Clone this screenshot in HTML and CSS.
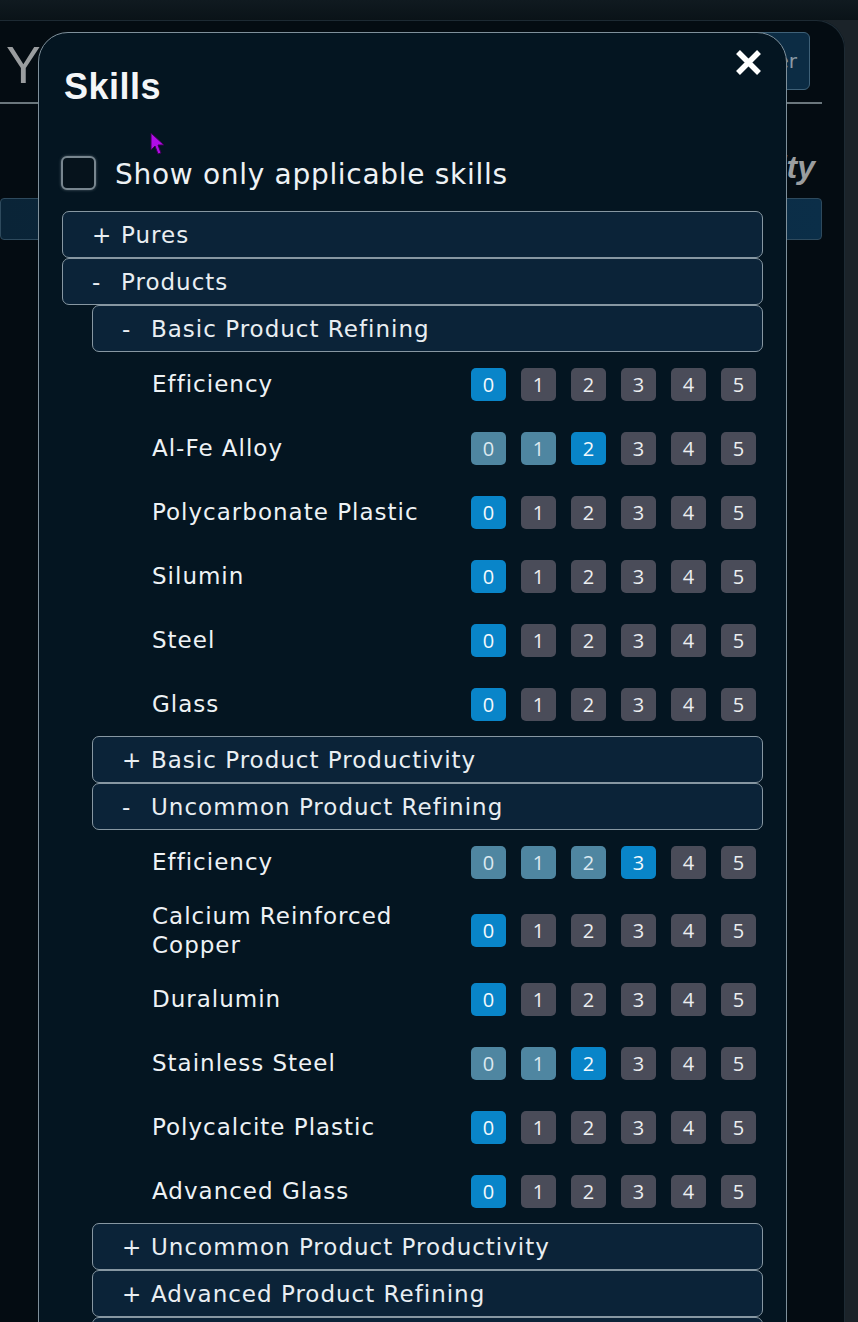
FILE: index.html
```html
<!DOCTYPE html>
<html lang="en">
  <head>
    <meta charset="UTF-8" />
    <meta name="viewport" content="width=device-width, initial-scale=1.0" />
    <title>Skills</title>
    <link rel="stylesheet" href="styles.css">
  </head>
  <body>
    <div class="panel">
      <div class="topbar">
        <span class="brand">Y</span>
        <button class="topbtn">Filter</button>
      </div>
      <div class="colhead">Productivity</div>
      <div class="searchbar"></div>
    </div>

    <div class="modal">
      <button class="close" aria-label="Close">
        <svg width="27" height="27" viewBox="0 0 27 27">
          <path d="M3 3 L24 24 M24 3 L3 24" stroke="#fff" stroke-width="5.5" fill="none" />
        </svg>
      </button>
      <h2 class="title">Skills</h2>
      <label class="only">
        <span class="box"></span>
        <span class="only-text">Show only applicable skills</span>
      </label>

      <div class="tree">
        <div class="head"><span class="sign">+</span>Pures</div>
        <div class="head"><span class="sign">-</span>Products</div>
        <div class="sub">
          <div class="head"><span class="sign">-</span>Basic Product Refining</div>
          <div class="skills" id="basicRefining"></div>
          <div class="head"><span class="sign">+</span>Basic Product Productivity</div>
          <div class="head"><span class="sign">-</span>Uncommon Product Refining</div>
          <div class="skills" id="uncommonRefining"></div>
          <div class="head"><span class="sign">+</span>Uncommon Product Productivity</div>
          <div class="head"><span class="sign">+</span>Advanced Product Refining</div>
          <div class="head"><span class="sign">+</span>Advanced Product Productivity</div>
        </div>
      </div>
    </div>

    <svg class="cursor" width="16" height="24" viewBox="0 0 16 24">
      <path d="M1 1 L1 18 L5 14 L8 22 L11 21 L8 13 L14 13 Z" fill="#b10ce6" stroke="#3a0050" stroke-width="1" />
    </svg>

    <script>
      // skill level per row
      let basicRefining = [
        ["Efficiency", 0],
        ["Al-Fe Alloy", 2],
        ["Polycarbonate Plastic", 0],
        ["Silumin", 0],
        ["Steel", 0],
        ["Glass", 0],
      ];
      let uncommonRefining = [
        ["Efficiency", 3],
        ["Calcium Reinforced Copper", 0],
        ["Duralumin", 0],
        ["Stainless Steel", 2],
        ["Polycalcite Plastic", 0],
        ["Advanced Glass", 0],
      ];

      function buatBaris(nama, level) {
        let row = document.createElement("div");
        row.className = "row";

        let label = document.createElement("span");
        label.className = "label";
        label.textContent = nama;
        row.appendChild(label);

        let levels = document.createElement("div");
        levels.className = "levels";
        for (let i = 0; i <= 5; i++) {
          let btn = document.createElement("button");
          btn.className = "lvl";
          if (i < level) btn.className += " part";
          if (i === level) btn.className += " on";
          btn.textContent = i;
          levels.appendChild(btn);
        }
        row.appendChild(levels);
        return row;
      }

      function isiSkill(id, data) {
        let box = document.querySelector("#" + id);
        data.forEach((d) => box.appendChild(buatBaris(d[0], d[1])));
      }

      isiSkill("basicRefining", basicRefining);
      isiSkill("uncommonRefining", uncommonRefining);
    </script>
  </body>
</html>
```

FILE: styles.css
```css
html,
body {
  margin: 0;
  height: 100%;
  overflow: hidden;
}

body {
  background: linear-gradient(#101a20, #0a1318 20px, #1b2329 20px);
  font-family: "DejaVu Sans", sans-serif;
  color: #eef2f5;
  position: relative;
}

/* page behind the dialog */
.panel {
  margin-top: 20px;
  width: 845px;
  height: 1302px;
  background: #040c12;
  border-top-right-radius: 28px;
  box-shadow: inset -1px 1px 0 #1d2a33;
}
.topbar {
  width: 810px;
  height: 82px;
  padding-right: 12px;
  border-bottom: 2px solid #6b777d;
  display: flex;
  justify-content: space-between;
  align-items: flex-start;
}
.brand {
  font-family: "Liberation Sans", sans-serif;
  font-size: 52px;
  line-height: 58px;
  margin: 16px 0 0 6px;
  color: #9a9d9f;
}
.topbtn {
  margin-top: 12px;
  width: 75px;
  height: 58px;
  padding-right: 12px;
  background: #0c2c44;
  border: 1px solid #3f6178;
  border-radius: 6px;
  color: #8a9aa4;
  font-family: "DejaVu Sans", sans-serif;
  font-size: 20px;
  text-align: right;
}
.colhead {
  width: 815px;
  margin-top: 45px;
  text-align: right;
  font-family: "Liberation Sans", sans-serif;
  font-style: italic;
  font-weight: bold;
  font-size: 32px;
  line-height: 36px;
  color: #9a9d9f;
}
.searchbar {
  width: 820px;
  height: 40px;
  margin-top: 13px;
  background: linear-gradient(90deg, #0a2437, #0b2e48);
  border: 1px solid #2e4a5d;
  border-radius: 4px;
}

/* dialog */
.modal {
  position: absolute;
  left: 38px;
  top: 32px;
  width: 701px;
  min-height: 1400px;
  padding: 32px 23px;
  background: #041521;
  border: 1px solid #7f909b;
  border-radius: 30px;
}
.close {
  position: absolute;
  top: 16px;
  right: 24px;
  padding: 0;
  width: 27px;
  height: 27px;
  background: none;
  border: none;
}
.close svg {
  display: block;
}
.title {
  margin: 0;
  padding-left: 2px;
  font-family: "Liberation Sans", sans-serif;
  font-weight: bold;
  font-size: 36px;
  line-height: 44px;
  letter-spacing: 0.5px;
  color: #f4f6f8;
}
.only {
  display: flex;
  align-items: center;
  height: 34px;
  margin: 47px 0 21px 0;
  font-size: 28px;
  letter-spacing: 0.7px;
  line-height: 34px;
}
.only-text {
  padding-top: 4px;
}
.box {
  width: 31px;
  height: 30px;
  margin: 0 19px 0 -1px;
  border: 2px solid #78868f;
  border-radius: 6px;
  background: #06131c;
  box-shadow: 0 0 3px #52616b;
}

.head {
  box-sizing: border-box;
  height: 47px;
  padding-left: 29px;
  display: flex;
  align-items: center;
  background: #0b2338;
  border: 1px solid #8797a2;
  border-radius: 7px;
  font-size: 23px;
  letter-spacing: 1px;
  color: #e9eef2;
}
.sign {
  display: inline-block;
  width: 29px;
}
.sub {
  margin-left: 30px;
}

.skills {
  padding: 0 7px 0 60px;
}
.row {
  display: flex;
  align-items: center;
  padding: 7.5px 0;
}
.label {
  flex: 1;
  padding-right: 12px;
  font-size: 23px;
  letter-spacing: 1px;
  line-height: 29px;
  color: #eef2f5;
}
.levels {
  display: flex;
  gap: 15px;
  margin: 8px 0;
}
.lvl {
  width: 35px;
  height: 33px;
  padding: 0;
  border: none;
  border-radius: 5px;
  background: #4a4c59;
  color: #eceef0;
  font-family: "Open Sans", sans-serif;
  font-size: 20px;
  line-height: 33px;
}
.lvl.part {
  background: #4f86a1;
  color: #dce9f0;
}
.lvl.on {
  background: #0985c9;
  color: #f4f9fc;
}

.cursor {
  position: absolute;
  left: 150px;
  top: 132px;
}
```
